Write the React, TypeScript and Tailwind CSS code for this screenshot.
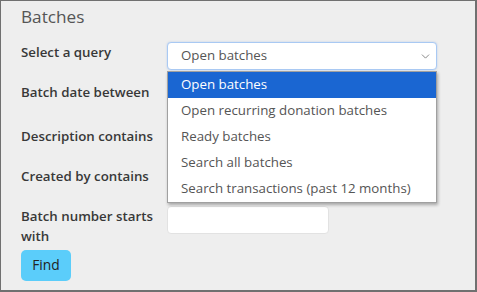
import { ChevronDown } from "lucide-react";

const options = [
  "Open batches",
  "Open recurring donation batches",
  "Ready batches",
  "Search all batches",
  "Search transactions (past 12 months)",
];

function Label({ children }: { children: React.ReactNode }) {
  return (
    <div className="w-[146px] shrink-0 text-[13.3px] leading-[20px] font-semibold text-[#383838]">
      {children}
    </div>
  );
}

function TextInput() {
  return (
    <div className="w-[162px] h-[28px] bg-white rounded-[4px] border border-[#e2e2e2]" />
  );
}

export default function App() {
  return (
    <div
      className="w-[477px] h-[292px] bg-[#eeeeee] border-t border-l border-r-2 border-b-2 border-[#707070] px-5 pt-[4px] overflow-hidden"
      style={{ fontFamily: '"Open Sans", "Liberation Sans", sans-serif' }}
    >
      <h2 className="text-[17.2px] leading-[24px] text-[#555555]">Batches</h2>

      <div className="mt-[13px] flex flex-col">
        <div className="flex h-[40px]">
          <Label>Select a query</Label>
          <div className="relative">
            <div className="w-[270px] h-[28px] bg-white rounded-[4px] border border-[#a9c9f3] shadow-[0_0_2px_rgba(80,140,230,0.35)] flex items-center justify-between pl-[13px] pr-[4px]">
              <span className="text-[13.3px] text-[#555555]">Open batches</span>
              <ChevronDown size={13} strokeWidth={1.6} className="text-[#777777]" />
            </div>
            <ul className="absolute left-0 top-[29px] z-10 w-[270px] bg-white border border-[#a0a0a0] shadow-[1px_2px_3px_rgba(0,0,0,0.3)]">
              {options.map((opt, i) => (
                <li
                  key={opt}
                  className={
                    i === 0
                      ? "h-[26px] pl-[13px] flex items-center text-[13.3px] text-white bg-[#1a66d2]"
                      : "h-[26px] pl-[13px] flex items-center text-[13.3px] text-[#555555]"
                  }
                >
                  {opt}
                </li>
              ))}
            </ul>
          </div>
        </div>

        <div className="flex h-[44px]">
          <Label>Batch date between</Label>
          <TextInput />
        </div>

        <div className="flex h-[40px]">
          <Label>Description contains</Label>
          <TextInput />
        </div>

        <div className="flex h-[40px]">
          <Label>Created by contains</Label>
          <TextInput />
        </div>

        <div className="flex h-[44px]">
          <Label>Batch number starts with</Label>
          <TextInput />
        </div>

        <button className="w-[50px] h-[31px] rounded-[5px] bg-[#5bcdfa] text-[13.8px] font-medium text-[#222222]">
          Find
        </button>
      </div>
    </div>
  );
}
